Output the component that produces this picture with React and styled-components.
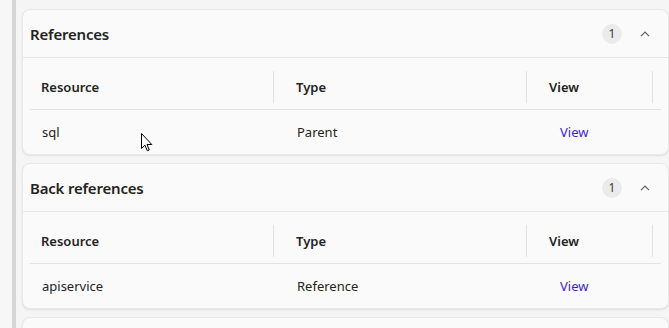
import React from "react";
import styled, { createGlobalStyle } from "styled-components";

const GlobalStyle = createGlobalStyle`
  html, body { margin: 0; padding: 0; }
  body {
    background: #f5f5f5;
    font-family: "Noto Sans", "Open Sans", sans-serif;
    color: #242424;
    overflow: hidden;
  }
`;

const Page = styled.div`
  display: flex;
  height: 328px;
  overflow: hidden;
  position: relative;
`;

const SidePane = styled.div`
  width: 12px;
  flex-shrink: 0;
  background: #f7f7f7;
`;

const Splitter = styled.div`
  width: 4px;
  flex-shrink: 0;
  background: #d6d6d6;
`;

const Main = styled.div`
  flex: 1;
  display: flex;
  flex-direction: column;
  gap: 8px;
  padding: 9px 0 0 6px;
  min-width: 0;
`;

const Card = styled.section`
  flex-shrink: 0;
  background: #fafafa;
  border: 1px solid #e8e8e8;
  border-radius: 8px;
  box-shadow: 0 1px 2px rgba(0, 0, 0, 0.09);
`;

const CardHeader = styled.header`
  height: 47px;
  display: flex;
  align-items: center;
  padding: 0 13px 0 7px;
  border-bottom: 1px solid #e6e6e6;
`;

const Title = styled.h2`
  margin: 0;
  font-size: 15px;
  font-weight: 600;
  color: #242424;
  letter-spacing: -0.2px;
`;

const Badge = styled.span`
  margin-left: auto;
  width: 20px;
  height: 20px;
  border-radius: 50%;
  background: #ebebeb;
  color: #4f3630;
  font-size: 12px;
  display: flex;
  align-items: center;
  justify-content: center;
`;

const Chevron = styled.button`
  margin-left: 13px;
  width: 20px;
  height: 20px;
  padding: 0;
  border: none;
  background: transparent;
  display: flex;
  align-items: center;
  justify-content: center;
  color: #616161;
`;

const TableWrap = styled.div`
  padding: 7px 7px 0 7px;
`;

const Row = styled.div`
  display: grid;
  grid-template-columns: 255px 253px 126px;
  height: 44px;
  border-bottom: ${(p) => (p.$header ? "1px solid #e3e3e3" : "none")};
`;

const HeadCell = styled.div`
  display: flex;
  align-items: center;
  padding-left: 11px;
  font-size: 13px;
  font-weight: 600;
  color: #242424;
`;

const HeadLabel = styled.span`
  flex: 1;
`;

const Separator = styled.span`
  width: 1px;
  height: 32px;
  background: #e3e3e3;
  margin-right: 11px;
`;

const Cell = styled.div`
  display: flex;
  align-items: center;
  padding-left: ${(p) => (p.$link ? "22px" : "12px")};
  font-size: 13px;
  color: #242424;
`;

const Link = styled.a`
  color: #3b1fd6;
  text-decoration: none;
  cursor: pointer;
`;

const Cursor = styled.svg`
  position: absolute;
  left: 141px;
  top: 133px;
  pointer-events: none;
`;

const columns = ["Resource", "Type", "View"];

function RefCard({ title, rows }) {
  return (
    <Card>
      <CardHeader>
        <Title>{title}</Title>
        <Badge>{rows.length}</Badge>
        <Chevron aria-label="Collapse">
          <svg width="10" height="6" viewBox="0 0 10 6" fill="none">
            <path d="M1 5.2 L5 1.2 L9 5.2" stroke="currentColor" strokeWidth="1.2" />
          </svg>
        </Chevron>
      </CardHeader>
      <TableWrap>
        <Row $header>
          {columns.map((c) => (
            <HeadCell key={c}>
              <HeadLabel>{c}</HeadLabel>
              <Separator />
            </HeadCell>
          ))}
        </Row>
        {rows.map((r) => (
          <Row key={r.resource}>
            <Cell>{r.resource}</Cell>
            <Cell>{r.type}</Cell>
            <Cell $link>
              <Link>View</Link>
            </Cell>
          </Row>
        ))}
      </TableWrap>
    </Card>
  );
}

export default function App() {
  return (
    <>
      <GlobalStyle />
      <Page>
        <SidePane />
        <Splitter />
        <Main>
          <RefCard title="References" rows={[{ resource: "sql", type: "Parent" }]} />
          <RefCard
            title="Back references"
            rows={[{ resource: "apiservice", type: "Reference" }]}
          />
          <Card>
            <CardHeader />
          </Card>
        </Main>
        <Cursor width="12" height="19" viewBox="0 0 12 19">
          <path
            d="M0.5 0.5 L0.5 15.5 L4 12.2 L6.3 17.8 L8.3 17 L6 11.5 L10.8 11.5 Z"
            fill="#fff"
            stroke="#000"
            strokeWidth="1"
            strokeLinejoin="round"
          />
        </Cursor>
      </Page>
    </>
  );
}
